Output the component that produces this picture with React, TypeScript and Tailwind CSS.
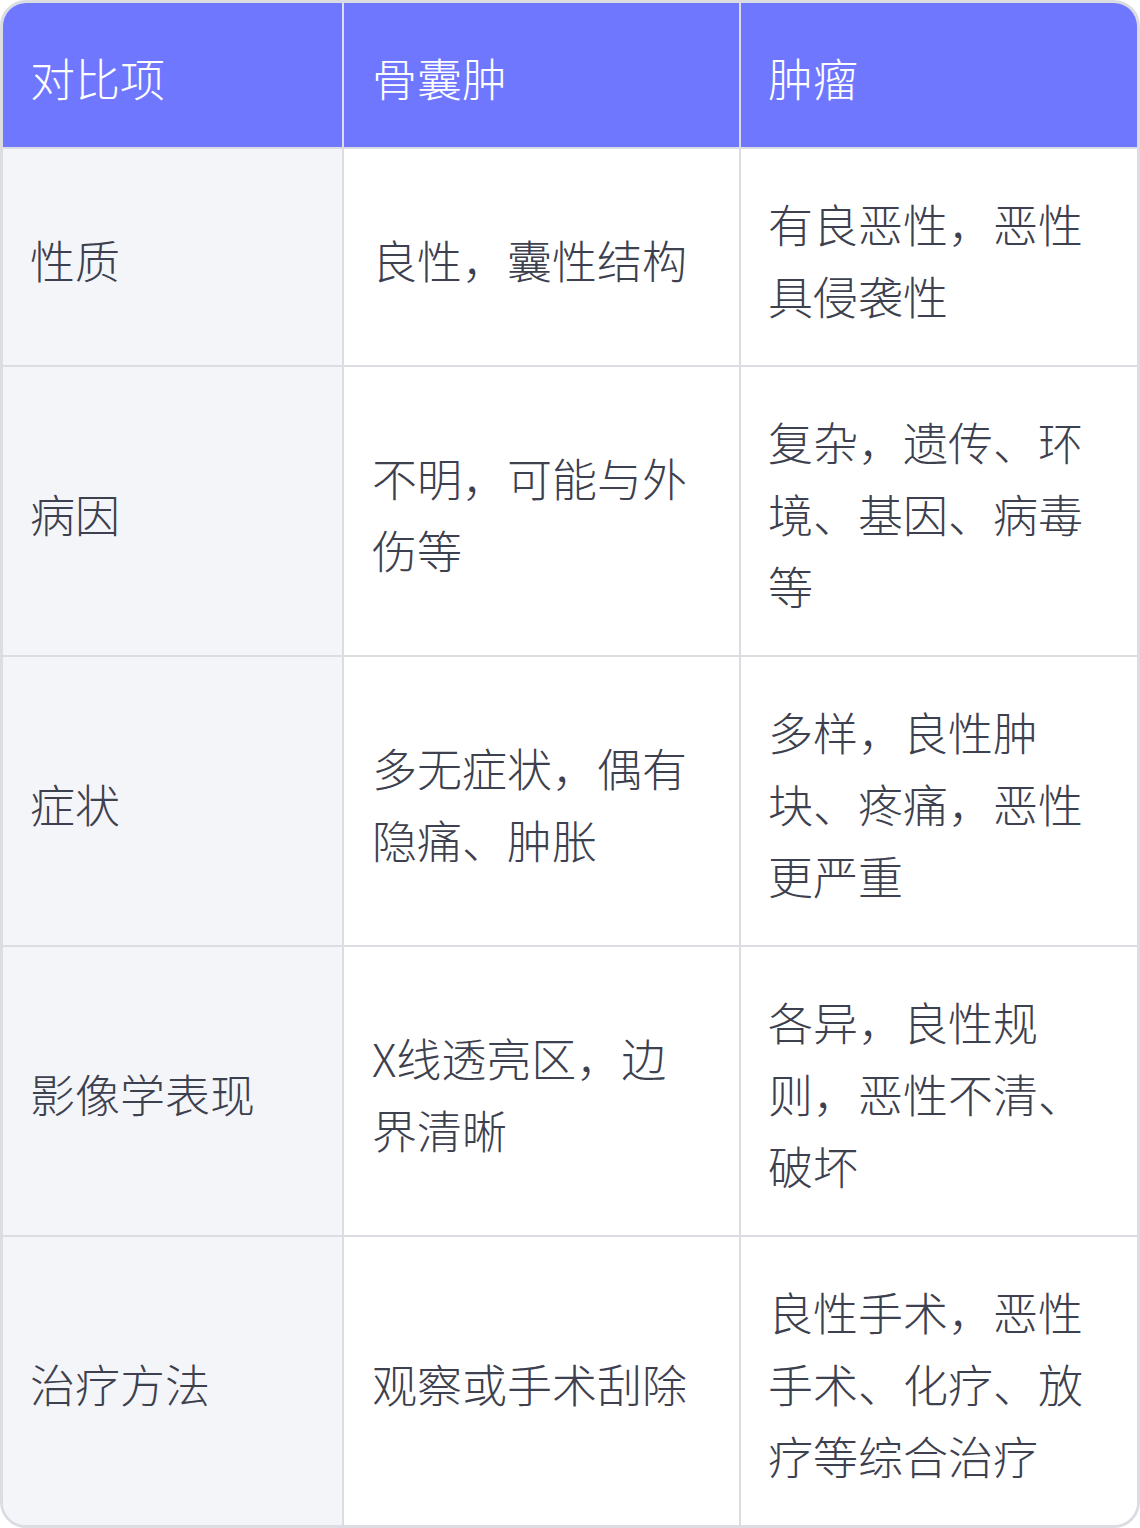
import React from "react";

const rows: [string, string, string][] = [
  ["性质", "良性，囊性结构", "有良恶性，恶性具侵袭性"],
  ["病因", "不明，可能与外伤等", "复杂，遗传、环境、基因、病毒等"],
  ["症状", "多无症状，偶有隐痛、肿胀", "多样，良性肿块、疼痛，恶性更严重"],
  ["影像学表现", "X线透亮区，边界清晰", "各异，良性规则，恶性不清、破坏"],
  ["治疗方法", "观察或手术刮除", "良性手术，恶性手术、化疗、放疗等综合治疗"],
];

export default function App() {
  return (
    <div className="w-[1140px] h-[1528px] bg-white font-['Noto_Sans_CJK_SC','Noto_Sans',sans-serif]">
      <div className="h-full border-[3px] border-[#dcdde3] rounded-[26px] overflow-hidden">
        <div className="grid grid-cols-[341px_397px_1fr] grid-rows-[146px_218px_290px_290px_290px_288px] h-full text-[45px] leading-[72px] font-light">
          {/* Header */}
          <div className="bg-[#7077ff] text-white pl-[27px] pr-[20px] pt-[5px] flex items-center border-r-2 border-b-2 border-[#dcdde3]">
            对比项
          </div>
          <div className="bg-[#7077ff] text-white pl-[28px] pr-[28px] pt-[5px] flex items-center border-r-2 border-b-2 border-[#dcdde3]">
            骨囊肿
          </div>
          <div className="bg-[#7077ff] text-white pl-[27px] pr-[28px] pt-[5px] flex items-center border-b-2 border-[#dcdde3]">
            肿瘤
          </div>

          {rows.map((r, i) => (
            <React.Fragment key={i}>
              <div
                className={`bg-[#f4f5f9] text-[#3d404e] pl-[27px] pr-[20px] pt-[5px] flex items-center border-r-2 border-[#dcdde3] ${
                  i < rows.length - 1 ? "border-b-2" : ""
                }`}
              >
                {r[0]}
              </div>
              <div
                className={`bg-white text-[#3d404e] pl-[28px] pr-[28px] pt-[5px] flex items-center border-r-2 border-[#dcdde3] ${
                  i < rows.length - 1 ? "border-b-2" : ""
                }`}
              >
                <span>{r[1]}</span>
              </div>
              <div
                className={`bg-white text-[#3d404e] pl-[27px] pr-[28px] pt-[5px] flex items-center border-[#dcdde3] ${
                  i < rows.length - 1 ? "border-b-2" : ""
                }`}
              >
                <span>{r[2]}</span>
              </div>
            </React.Fragment>
          ))}
        </div>
      </div>
    </div>
  );
}
